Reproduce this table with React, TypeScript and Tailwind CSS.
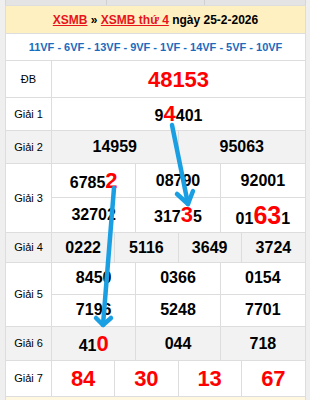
import React from "react";

const font = { fontFamily: '"Liberation Sans", Arial, sans-serif' };

// one number; digits listed in `hi` are drawn large and red
function Num({ value, hi = [], big }: { value: string; hi?: number[]; big?: boolean }) {
  return (
    <span className="text-[16px] font-bold text-black leading-none">
      {value.split("").map((d, i) =>
        hi.includes(i) ? (
          <span key={i} className={`${big ? "text-[25px]" : "text-[22px]"} text-[#f00]`}>
            {d}
          </span>
        ) : (
          <span key={i}>{d}</span>
        )
      )}
    </span>
  );
}

function Label({ text }: { text: string }) {
  return (
    <div className="w-[46px] shrink-0 border-r border-[#ddd] flex items-center justify-center text-[11px] text-black">
      {text}
    </div>
  );
}

function Cell({ children, last }: { children: React.ReactNode; last?: boolean }) {
  return (
    <div className={`flex items-center justify-center ${last ? "" : "border-r border-[#ddd]"}`}>
      {children}
    </div>
  );
}

export default function App() {
  return (
    <div className="relative w-[310px] h-[400px] overflow-hidden bg-[#efefef]" style={font}>
      {/* end of the table above */}
      <div className="h-[5px] flex pl-[5px] pr-[4px]">
        <div className="flex-1 flex bg-[#e4e4e4] border-x border-[#d6d6d6]">
          <div className="w-[101px] border-r border-[#d0d0d0]" />
          <div className="w-[98px] border-r border-[#d0d0d0]" />
        </div>
      </div>

      <div className="pl-[5px] pr-[4px]">
        <div className="border border-[#ddd] border-b-0 bg-white">
          {/* header */}
          <div className="h-[28px] bg-[#fff0c2] border-b border-[#ddd] flex items-center justify-center text-[12px] font-bold text-black">
            <span className="text-[#e8141c] underline">XSMB</span>
            <span>&nbsp;»&nbsp;</span>
            <span className="text-[#e8141c] underline">XSMB thứ 4</span>
            <span>&nbsp;ngày 25-2-2026</span>
          </div>

          {/* codes */}
          <div className="h-[27px] border-b border-[#ddd] flex items-center justify-center text-[11px] font-bold text-[#1b6bbd]">
            11VF - 6VF - 13VF - 9VF - 1VF - 14VF - 5VF - 10VF
          </div>

          {/* ĐB */}
          <div className="h-[37px] flex border-b border-[#ddd]">
            <Label text="ĐB" />
            <div className="flex-1 flex items-center justify-center text-[22px] font-bold text-[#f00]">48153</div>
          </div>

          {/* Giải 1 */}
          <div className="h-[33px] flex border-b border-[#ddd]">
            <Label text="Giải 1" />
            <div className="flex-1 flex items-center justify-center">
              <Num value="94401" hi={[1]} />
            </div>
          </div>

          {/* Giải 2 */}
          <div className="h-[33px] flex border-b border-[#ddd] bg-[#f2f2f2]">
            <Label text="Giải 2" />
            <div className="flex-1 grid grid-cols-2">
              <Cell><Num value="14959" /></Cell>
              <Cell last><Num value="95063" /></Cell>
            </div>
          </div>

          {/* Giải 3 */}
          <div className="h-[69px] flex border-b border-[#ddd]">
            <Label text="Giải 3" />
            <div className="flex-1 grid grid-cols-3 grid-rows-2">
              <div className="flex items-center justify-center border-r border-b border-[#ddd]"><Num value="67852" hi={[4]} /></div>
              <div className="flex items-center justify-center border-r border-b border-[#ddd]"><Num value="08790" /></div>
              <div className="flex items-center justify-center border-b border-[#ddd]"><Num value="92001" /></div>
              <Cell><Num value="32702" /></Cell>
              <Cell><Num value="31735" hi={[3]} /></Cell>
              <Cell last><Num value="01631" hi={[2, 3]} big /></Cell>
            </div>
          </div>

          {/* Giải 4 */}
          <div className="h-[30px] flex border-b border-[#ddd] bg-[#f2f2f2]">
            <Label text="Giải 4" />
            <div className="flex-1 grid grid-cols-4">
              <Cell><Num value="0222" /></Cell>
              <Cell><Num value="5116" /></Cell>
              <Cell><Num value="3649" /></Cell>
              <Cell last><Num value="3724" /></Cell>
            </div>
          </div>

          {/* Giải 5 */}
          <div className="h-[64px] flex border-b border-[#ddd]">
            <Label text="Giải 5" />
            <div className="flex-1 grid grid-cols-3 grid-rows-2">
              <div className="flex items-center justify-center border-r border-b border-[#ddd]"><Num value="8450" /></div>
              <div className="flex items-center justify-center border-r border-b border-[#ddd]"><Num value="0366" /></div>
              <div className="flex items-center justify-center border-b border-[#ddd]"><Num value="0154" /></div>
              <Cell><Num value="7196" /></Cell>
              <Cell><Num value="5248" /></Cell>
              <Cell last><Num value="7701" /></Cell>
            </div>
          </div>

          {/* Giải 6 */}
          <div className="h-[34px] flex border-b border-[#ddd] bg-[#f2f2f2]">
            <Label text="Giải 6" />
            <div className="flex-1 grid grid-cols-3">
              <Cell><Num value="410" hi={[2]} /></Cell>
              <Cell><Num value="044" /></Cell>
              <Cell last><Num value="718" /></Cell>
            </div>
          </div>

          {/* Giải 7 */}
          <div className="h-[36px] flex border-b border-[#ddd]">
            <Label text="Giải 7" />
            <div className="flex-1 grid grid-cols-4 text-[22px] font-bold text-[#f00]">
              <Cell>84</Cell>
              <Cell>30</Cell>
              <Cell>13</Cell>
              <Cell last>67</Cell>
            </div>
          </div>
        </div>
        <div className="h-[4px] bg-[#fff7e0] border-x border-[#ddd]" />
      </div>

      {/* drawn arrows */}
      <svg className="absolute inset-0 pointer-events-none" width="310" height="400">
        <g stroke="#1a9fe3" strokeWidth="4.5" strokeLinecap="round" fill="none">
          <line x1="172" y1="125" x2="188" y2="204" />
          <polyline points="177,194 188,204 193,191" strokeLinejoin="round" />
          <line x1="114" y1="188" x2="103" y2="325" />
          <polyline points="96,318 103,325 111,318" strokeLinejoin="round" />
        </g>
      </svg>
    </div>
  );
}
